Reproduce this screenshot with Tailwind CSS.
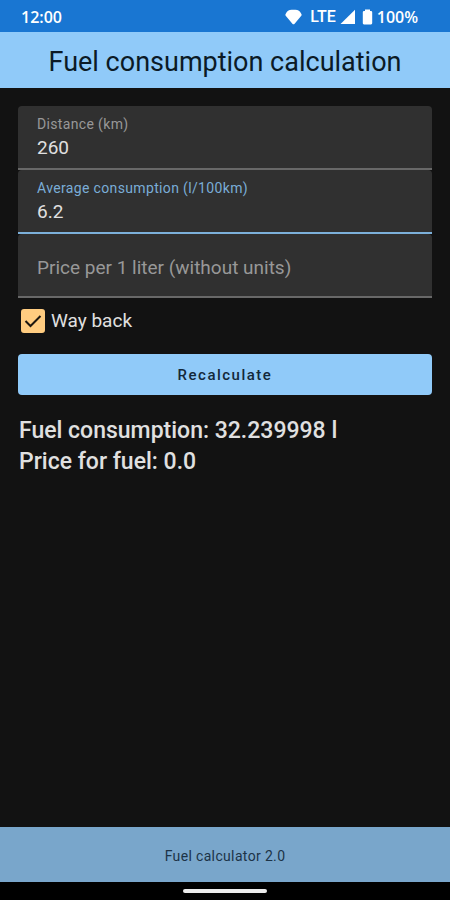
<!DOCTYPE html>
<html lang="en">
<head>
<meta charset="utf-8">
<meta name="viewport" content="width=device-width, initial-scale=1">
<title>Fuel calculator</title>
<script src="https://cdn.jsdelivr.net/npm/@tailwindcss/browser@4"></script>
</head>
<body class="flex min-h-screen flex-col bg-[#121212] font-[Roboto,sans-serif] text-[#e0e0e0]">
  <div class="flex h-8 items-center justify-between bg-[#1976d2] pt-px pr-8 pl-[21px] font-['Open_Sans',sans-serif] text-base font-semibold text-white">
    <time>12:00</time>
    <div class="flex items-center">
      <svg class="mr-2 h-4 w-[17px]" viewBox="0 0 17 16" fill="currentColor" aria-hidden="true"><path d="M.5 5.200C1.800 2.600 3 1.400 4.800 1.100c2.400-.4 5-.4 7.400 0 1.800.3 3 1.500 4.300 4.100.3.600.2 1-.2 1.500l-6.700 8c-.6.7-1.600.7-2.200 0l-6.700-8C.3 6.200.2 5.800.5 5.200Z"/></svg>
      <span class="font-[Roboto,sans-serif] font-medium">LTE</span>
      <svg class="ml-1 h-4 w-4" viewBox="0 0 16 16" fill="currentColor" aria-hidden="true"><path d="M15 .8v14.200H.5Z"/></svg>
      <svg class="mr-1 ml-1.5 h-4 w-[11px]" viewBox="0 0 11 16" fill="currentColor" aria-hidden="true"><path d="M3 .5h5v1.500h1c.7 0 1.200.6 1.200 1.300v10.700c0 .8-.5 1.400-1.200 1.400H2C1.300 15.400.8 14.800.8 14V3.300c0-.7.5-1.300 1.200-1.300h1Z"/></svg>
      <span>100%</span>
    </div>
  </div>
  <header class="flex h-14 items-center justify-center bg-[#90caf9] pt-1">
    <h1 class="text-[27px] leading-8 text-[#0b1a26]">Fuel consumption calculation</h1>
  </header>
  <main class="flex-1 px-[18px] pt-[18px]">
    <form>
      <div class="flex h-16 flex-col rounded-t border-b-2 border-[#686868] bg-[#303030] px-[19px] pt-2.5">
        <label for="distance" class="text-sm leading-4 tracking-wide text-[#989898]">Distance (km)</label>
        <input id="distance" type="text" inputmode="decimal" value="260" class="h-[30px] w-full bg-transparent text-[19px] outline-none">
      </div>
      <div class="flex h-16 flex-col rounded-t border-b-2 border-[#7cb0da] bg-[#303030] px-[19px] pt-2.5">
        <label for="consumption" class="text-sm leading-4 tracking-wide text-[#7aadd7]">Average consumption (l/100km)</label>
        <input id="consumption" type="text" inputmode="decimal" value="6.2" class="h-[30px] w-full bg-transparent text-[19px] outline-none">
      </div>
      <div class="h-16 rounded-t border-b-2 border-[#686868] bg-[#303030] px-[19px] pt-1">
        <input id="price" type="text" inputmode="decimal" aria-label="Price per 1 liter (without units)" placeholder="Price per 1 liter (without units)" class="h-full w-full bg-transparent text-[19px] outline-none placeholder:text-[#989898]">
      </div>
      <div class="flex h-[46px] items-center pl-[3px]">
        <span class="grid">
          <input id="way-back" type="checkbox" checked class="peer col-start-1 row-start-1 size-6 appearance-none rounded-[3px] border-2 border-[#ffcc80] checked:bg-[#ffcc80]">
          <svg class="pointer-events-none invisible col-start-1 row-start-1 size-6 peer-checked:visible" viewBox="0 0 24 24" fill="none" stroke="#1c1710" stroke-width="2" aria-hidden="true"><path d="m4.500 12 5 5L19.500 7"/></svg>
        </span>
        <label for="way-back" class="pl-1.5 text-[19px] leading-6">Way back</label>
      </div>
      <button type="button" class="mt-2.5 h-[41px] w-full rounded bg-[#90caf9] pt-0.5 text-[15px] font-medium tracking-widest text-[#13283a]">Recalculate</button>
    </form>
    <section class="mt-5 pl-px text-[23px] leading-[31px] font-medium" aria-label="Result">
      <p>Fuel consumption: 32.239998 l</p>
      <p>Price for fuel: 0.0</p>
    </section>
  </main>
  <footer class="flex h-[55px] items-center justify-center bg-[#79a6cb] pt-0.5 text-sm tracking-wide text-[#1c3347]">Fuel calculator 2.0</footer>
  <div class="flex h-[18px] items-center justify-center bg-black"><span class="h-1 w-[84px] rounded-full bg-[#ececec]"></span></div>
</body>
</html>
